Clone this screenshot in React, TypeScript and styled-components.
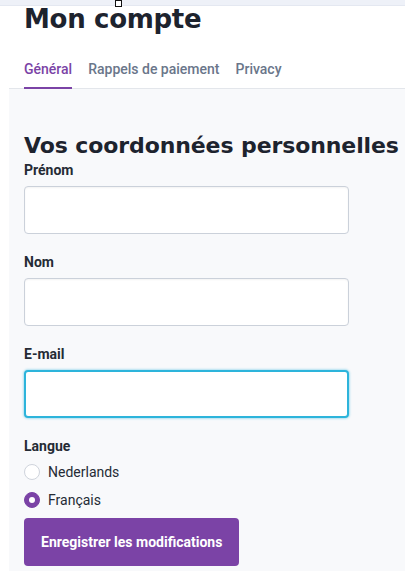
import React, { useState } from "react";
import styled, { createGlobalStyle } from "styled-components";

const Global = createGlobalStyle`
  html, body { margin: 0; padding: 0; background: #ffffff; }
  body { font-family: Roboto, "Liberation Sans", Arial, sans-serif; color: #252b35; }
  * { box-sizing: border-box; }
`;

const Page = styled.div`
  width: 405px;
  min-height: 583px;
  background: #ffffff;
  overflow: hidden;
`;

const TopStrip = styled.div`
  position: relative;
  height: 6px;
  background: #eef1f8;
  border-bottom: 1px solid #e4e8f1;
`;

const Handle = styled.span`
  position: absolute;
  left: 115px;
  top: 0;
  width: 7px;
  height: 7px;
  background: #ffffff;
  border: 1px solid #111111;
`;

const Title = styled.h1`
  margin: 0 0 0 24px;
  font-family: "DejaVu Sans", Verdana, sans-serif;
  font-weight: 700;
  font-size: 26px;
  line-height: 26px;
  color: #1d232e;
  letter-spacing: -0.3px;
`;

const TabBar = styled.nav`
  display: flex;
  gap: 16px;
  margin: 27px 0 0 9px;
  padding-left: 15px;
  border-bottom: 1px solid #e3e6eb;
`;

const Tab = styled.button<{ $active?: boolean }>`
  appearance: none;
  background: none;
  border: 0;
  border-bottom: 2px solid ${(p) => (p.$active ? "#7b43a6" : "transparent")};
  margin: 0 0 -1px;
  padding: 0 0 8px;
  font-family: Roboto, "Liberation Sans", Arial, sans-serif;
  font-weight: 500;
  font-size: 14px;
  line-height: 20px;
  color: ${(p) => (p.$active ? "#7b43a6" : "#6a768a")};
  cursor: pointer;
`;

const Panel = styled.section`
  margin-left: 9px;
  background: #f8f9fb;
  padding: 44px 15px 5px;
  display: flex;
  flex-direction: column;
  align-items: flex-start;
`;

const SectionTitle = styled.h2`
  margin: 0 0 1px;
  font-family: "DejaVu Sans", Verdana, sans-serif;
  font-weight: 700;
  font-size: 22px;
  line-height: 26px;
  color: #1d232e;
  white-space: nowrap;
  letter-spacing: -0.1px;
`;

const Field = styled.div`
  display: flex;
  flex-direction: column;
  gap: 6px;
  margin-bottom: 18px;
`;

const Label = styled.label`
  font-weight: 700;
  font-size: 14px;
  line-height: 20px;
  color: #252b35;
`;

const Input = styled.input<{ $focused?: boolean }>`
  width: 325px;
  height: 48px;
  background: #ffffff;
  border-radius: 4px;
  border: ${(p) => (p.$focused ? "2px solid #2db4db" : "1px solid #cbd1da")};
  box-shadow: ${(p) =>
    p.$focused
      ? "0 0 2px 1px rgba(45, 180, 219, 0.35)"
      : "inset 0 1px 2px rgba(0, 0, 0, 0.05)"};
  outline: none;
  padding: 0 12px;
  font-family: Roboto, sans-serif;
  font-size: 14px;
`;

const RadioGroup = styled.div`
  display: flex;
  flex-direction: column;
  gap: 8px;
  margin: 6px 0 8px;
`;

const RadioRow = styled.label`
  display: flex;
  align-items: center;
  gap: 8px;
  height: 20px;
  font-size: 14px;
  line-height: 20px;
  color: #252b35;
  cursor: pointer;
`;

const RadioDot = styled.span<{ $checked?: boolean }>`
  width: 16px;
  height: 16px;
  border-radius: 50%;
  display: flex;
  align-items: center;
  justify-content: center;
  background: ${(p) => (p.$checked ? "#7b43a6" : "#ffffff")};
  border: 1px solid ${(p) => (p.$checked ? "#7b43a6" : "#cfd4dc")};
  &::after {
    content: "";
    display: ${(p) => (p.$checked ? "block" : "none")};
    width: 6px;
    height: 6px;
    border-radius: 50%;
    background: #ffffff;
  }
`;

const SaveButton = styled.button`
  appearance: none;
  border: 0;
  border-radius: 4px;
  background: #7b43a6;
  color: #ffffff;
  height: 48px;
  padding: 0 17px;
  font-family: Roboto, "Liberation Sans", Arial, sans-serif;
  font-weight: 700;
  font-size: 14px;
  cursor: pointer;
`;

export default function App() {
  const [lang, setLang] = useState("fr");
  const tabs = ["Général", "Rappels de paiement", "Privacy"];
  return (
    <Page>
      <Global />
      <TopStrip>
        <Handle />
      </TopStrip>
      <Title>Mon compte</Title>
      <TabBar>
        {tabs.map((t, i) => (
          <Tab key={t} $active={i === 0}>
            {t}
          </Tab>
        ))}
      </TabBar>
      <Panel>
        <SectionTitle>Vos coordonnées personnelles</SectionTitle>
        <Field>
          <Label>Prénom</Label>
          <Input />
        </Field>
        <Field>
          <Label>Nom</Label>
          <Input />
        </Field>
        <Field>
          <Label>E-mail</Label>
          <Input $focused />
        </Field>
        <Label>Langue</Label>
        <RadioGroup>
          <RadioRow onClick={() => setLang("nl")}>
            <RadioDot $checked={lang === "nl"} />
            Nederlands
          </RadioRow>
          <RadioRow onClick={() => setLang("fr")}>
            <RadioDot $checked={lang === "fr"} />
            Français
          </RadioRow>
        </RadioGroup>
        <SaveButton>Enregistrer les modifications</SaveButton>
      </Panel>
    </Page>
  );
}
